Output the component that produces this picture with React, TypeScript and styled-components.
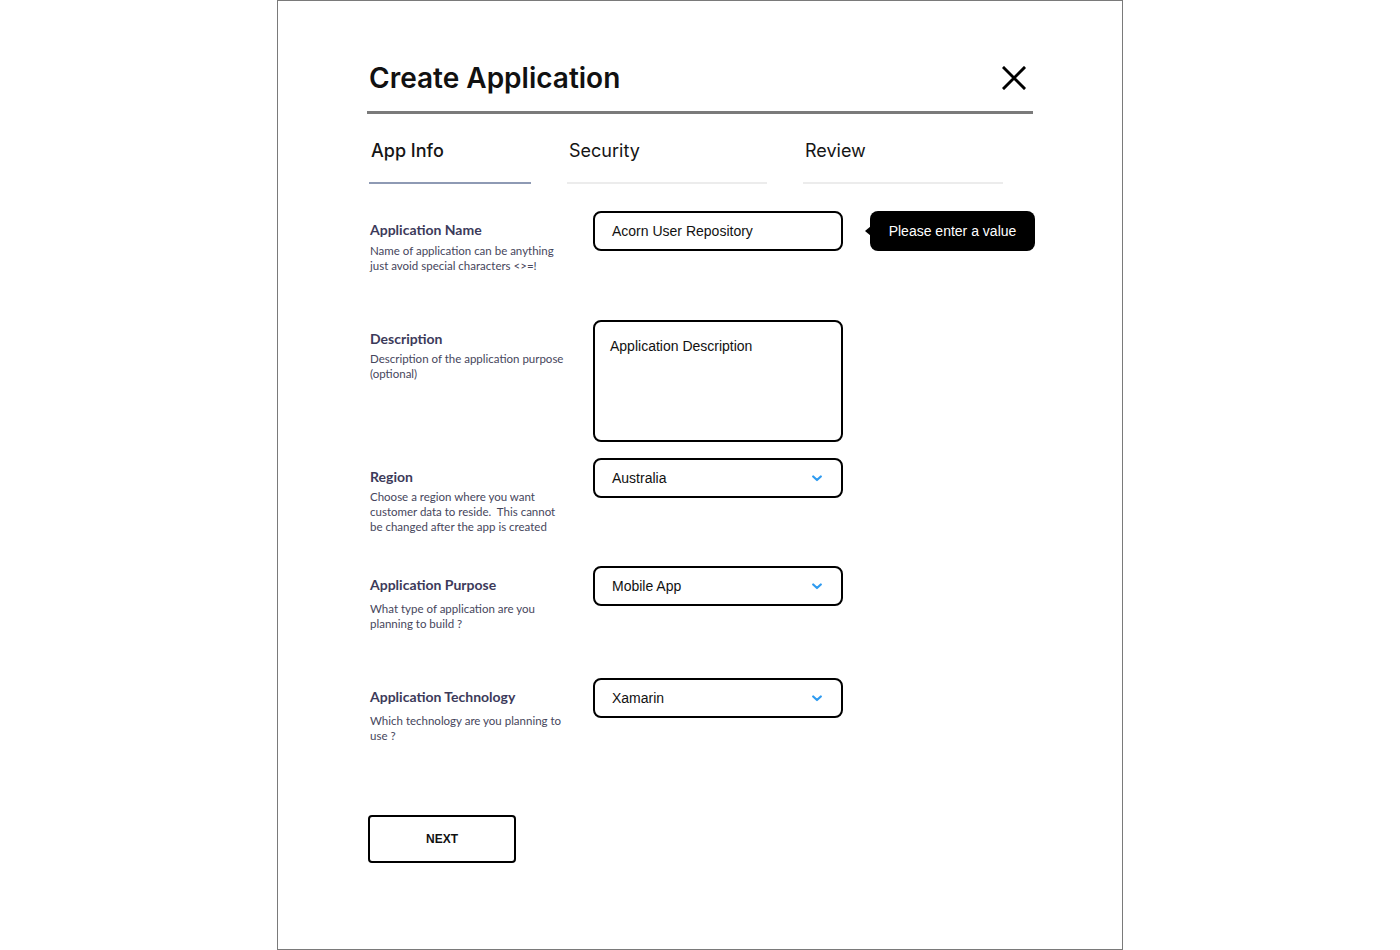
import styled, { createGlobalStyle } from "styled-components";

const GlobalStyle = createGlobalStyle`
  html, body {
    margin: 0;
    padding: 0;
    background: #ffffff;
  }
  * {
    box-sizing: border-box;
  }
`;

const tabs = [
  { name: "App Info", width: 162, active: true },
  { name: "Security", width: 200, active: false },
  { name: "Review", width: 200, active: false },
];

type Field = {
  title: string;
  lines: string[];
  kind: "input" | "textarea" | "select";
  value: string;
  space: number;
  descGap: number;
  tooltip?: string;
};

const fields: Field[] = [
  {
    title: "Application Name",
    lines: ["Name of application can be anything", "just avoid special characters <>=!"],
    kind: "input",
    value: "Acorn User Repository",
    space: 109,
    descGap: 4,
    tooltip: "Please enter a value",
  },
  {
    title: "Description",
    lines: ["Description of the application purpose", "(optional)"],
    kind: "textarea",
    value: "Application Description",
    space: 138,
    descGap: 3,
  },
  {
    title: "Region",
    lines: [
      "Choose a region where you want",
      "customer data to reside.  This cannot",
      "be changed after the app is created",
    ],
    kind: "select",
    value: "Australia",
    space: 108,
    descGap: 3,
  },
  {
    title: "Application Purpose",
    lines: ["What type of application are you", "planning to build ?"],
    kind: "select",
    value: "Mobile App",
    space: 112,
    descGap: 7,
  },
  {
    title: "Application Technology",
    lines: ["Which technology are you planning to", "use ?"],
    kind: "select",
    value: "Xamarin",
    space: 137,
    descGap: 7,
  },
];

function CloseIcon() {
  return (
    <svg width="24" height="24" viewBox="0 0 24 24" fill="none">
      <path d="M2 2 L22 22 M22 2 L2 22" stroke="#000" strokeWidth="3" strokeLinecap="square" />
    </svg>
  );
}

function Chevron() {
  return (
    <svg width="10" height="7" viewBox="0 0 10 7" fill="none">
      <path d="M1.2 1.5 L5 5 L8.8 1.5" stroke="#2f9bf0" strokeWidth="2.2" strokeLinecap="round" strokeLinejoin="round" />
    </svg>
  );
}

export default function App() {
  return (
    <>
      <GlobalStyle />
      <Frame>
        <Header>
          <Title>Create Application</Title>
          <CloseButton aria-label="Close">
            <CloseIcon />
          </CloseButton>
        </Header>

        <Tabs>
          {tabs.map((tab) => (
            <Tab key={tab.name} $width={tab.width} $active={tab.active}>
              {tab.name}
            </Tab>
          ))}
        </Tabs>

        <Form>
          {fields.map((field) => (
            <Row key={field.title} $space={field.space}>
              <Label>
                <LabelTitle>{field.title}</LabelTitle>
                <LabelDesc $gap={field.descGap}>
                  {field.lines.map((line) => (
                    <span key={line}>{line}</span>
                  ))}
                </LabelDesc>
              </Label>

              {field.kind === "input" && <TextBox>{field.value}</TextBox>}
              {field.kind === "textarea" && <TextArea>{field.value}</TextArea>}
              {field.kind === "select" && (
                <Select>
                  <span>{field.value}</span>
                  <Chevron />
                </Select>
              )}

              {field.tooltip && <Tooltip>{field.tooltip}</Tooltip>}
            </Row>
          ))}
        </Form>

        <NextButton>NEXT</NextButton>
      </Frame>
    </>
  );
}

const Frame = styled.div`
  width: 846px;
  height: 950px;
  margin: 0 auto;
  border: 1px solid #7a7a7a;
  padding: 0 89px;
  background: #fff;
`;

const Header = styled.header`
  display: flex;
  align-items: center;
  justify-content: space-between;
  padding: 60px 7px 16px 2px;
  border-bottom: 3px solid #7a7a7a;
`;

const Title = styled.h1`
  margin: 0;
  font-family: Inter, "Liberation Sans", sans-serif;
  font-size: 28px;
  font-weight: 600;
  line-height: 34px;
  color: #111;
`;

const CloseButton = styled.button`
  display: flex;
  padding: 0;
  border: none;
  background: none;
  cursor: pointer;
`;

const Tabs = styled.nav`
  display: grid;
  grid-template-columns: auto auto auto;
  justify-content: start;
  column-gap: 36px;
  margin-top: 26px;
  padding-left: 2px;
`;

const Tab = styled.div<{ $width: number; $active: boolean }>`
  width: ${(p) => p.$width}px;
  padding: 0 0 20px 2px;
  border-bottom: 2px solid ${(p) => (p.$active ? "#8e9ab4" : "#ececec")};
  font-family: Inter, "Liberation Sans", sans-serif;
  font-size: 18px;
  font-weight: ${(p) => (p.$active ? 500 : 400)};
  line-height: 22px;
  color: #151515;
`;

const Form = styled.section`
  display: flex;
  flex-direction: column;
  margin-top: 27px;
`;

const Row = styled.div<{ $space: number }>`
  display: grid;
  grid-template-columns: 226px 250px auto;
  align-items: start;
  min-height: ${(p) => p.$space}px;
`;

const Label = styled.div`
  padding: 10px 0 0 3px;
  font-family: Lato, "Open Sans", sans-serif;
`;

const LabelTitle = styled.div`
  font-size: 14px;
  font-weight: 700;
  line-height: 18px;
  color: #3c3a5a;
`;

const LabelDesc = styled.div<{ $gap: number }>`
  display: flex;
  flex-direction: column;
  margin-top: ${(p) => p.$gap}px;
  font-size: 11.5px;
  line-height: 15px;
  color: #46465c;
  white-space: pre;
`;

const fieldBase = `
  width: 250px;
  border: 2px solid #000;
  border-radius: 8px;
  background: #fff;
  font-family: "Liberation Sans", Arial, sans-serif;
  font-size: 14px;
  color: #111;
`;

const TextBox = styled.div`
  ${fieldBase}
  height: 40px;
  display: flex;
  align-items: center;
  padding: 0 17px;
`;

const TextArea = styled.div`
  ${fieldBase}
  height: 122px;
  padding: 16px 15px;
  line-height: 16px;
`;

const Select = styled.div`
  ${fieldBase}
  height: 40px;
  display: flex;
  align-items: center;
  justify-content: space-between;
  padding: 0 19px 0 17px;
`;

const Tooltip = styled.div`
  position: relative;
  width: 165px;
  height: 40px;
  margin-left: 27px;
  display: flex;
  align-items: center;
  justify-content: center;
  border-radius: 8px;
  background: #000;
  color: #fff;
  font-family: "Liberation Sans", Arial, sans-serif;
  font-size: 14px;

  &::before {
    content: "";
    position: absolute;
    left: -5px;
    top: 50%;
    transform: translateY(-50%);
    border-top: 5px solid transparent;
    border-bottom: 5px solid transparent;
    border-right: 6px solid #000;
  }
`;

const NextButton = styled.button`
  display: block;
  width: 148px;
  height: 48px;
  margin-left: 1px;
  border: 2px solid #000;
  border-radius: 4px;
  background: #fff;
  font-family: "Liberation Sans", Arial, sans-serif;
  font-size: 12px;
  font-weight: 700;
  color: #111;
  cursor: pointer;
`;
